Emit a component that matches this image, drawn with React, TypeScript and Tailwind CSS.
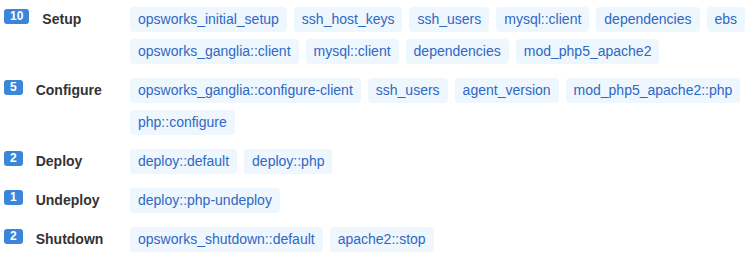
import React from "react";

const groups: { n: number; label: string; tags: string[] }[] = [
  {
    n: 10,
    label: "Setup",
    tags: [
      "opsworks_initial_setup",
      "ssh_host_keys",
      "ssh_users",
      "mysql::client",
      "dependencies",
      "ebs",
      "opsworks_ganglia::client",
      "mysql::client",
      "dependencies",
      "mod_php5_apache2",
    ],
  },
  {
    n: 5,
    label: "Configure",
    tags: [
      "opsworks_ganglia::configure-client",
      "ssh_users",
      "agent_version",
      "mod_php5_apache2::php",
      "php::configure",
    ],
  },
  { n: 2, label: "Deploy", tags: ["deploy::default", "deploy::php"] },
  { n: 1, label: "Undeploy", tags: ["deploy::php-undeploy"] },
  { n: 2, label: "Shutdown", tags: ["opsworks_shutdown::default", "apache2::stop"] },
];

export default function App() {
  return (
    <div
      className="w-[755px] h-[257px] bg-white pt-[7px] flex flex-col gap-[14px]"
      style={{ fontFamily: '"Liberation Sans", Arial, sans-serif' }}
    >
      {groups.map((g) => (
        <div key={g.label} className="flex items-start">
          <div className="w-[130px] shrink-0 pl-[4px] flex items-start h-[25px]">
            <span className="mt-[2px] h-[15px] px-[6px] rounded-[3px] bg-[#3a86da] text-white text-[12px] font-bold leading-[15px]">
              {g.n}
            </span>
            <span className="ml-[13px] text-[14px] leading-[25px] font-bold text-[#333333]">
              {g.label}
            </span>
          </div>
          <div className="flex flex-wrap gap-[7px] w-[622px]">
            {g.tags.map((t, i) => (
              <span
                key={i}
                className="h-[25px] px-[8px] rounded-[4px] bg-[#eef6fe] text-[#2f68c4] text-[14px] leading-[25px] whitespace-nowrap"
              >
                {t}
              </span>
            ))}
          </div>
        </div>
      ))}
    </div>
  );
}
